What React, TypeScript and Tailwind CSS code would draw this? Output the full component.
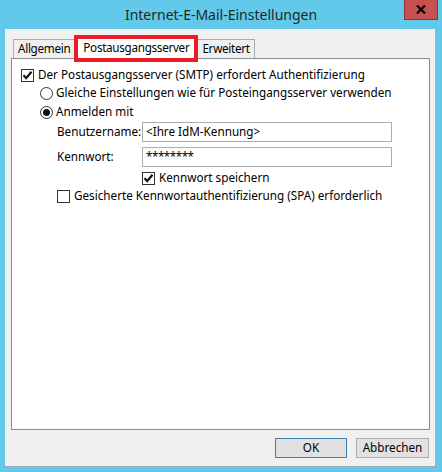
import { useState } from "react";

const font = { fontFamily: '"Segoe UI", "Noto Sans", "Open Sans", sans-serif' };

const Check = ({ checked }: { checked: boolean }) => (
  <span className="flex h-[13px] w-[13px] shrink-0 items-center justify-center border border-[#333] bg-white">
    {checked && (
      <svg width="11" height="11" viewBox="0 0 11 11">
        <path d="M1.5 5.3 L4.2 8.2 L9.5 1.8" fill="none" stroke="#111" strokeWidth="2.2" />
      </svg>
    )}
  </span>
);

const Radio = ({ checked }: { checked: boolean }) => (
  <span className="flex h-[13px] w-[13px] shrink-0 items-center justify-center rounded-full border border-[#333] bg-white">
    {checked && <span className="h-[7px] w-[7px] rounded-full bg-[#111]" />}
  </span>
);

export default function App() {
  const [tab] = useState(1);
  const tabs = ["Allgemein", "Postausgangsserver", "Erweitert"];

  return (
    <div className="flex h-[472px] w-[442px] flex-col bg-[#62c9ea] text-[11.7px] text-black" style={font}>
      {/* title bar */}
      <div className="relative flex h-[29px] shrink-0 items-center justify-center">
        <span className="text-[14px] text-[#1c2a1c]">Internet-E-Mail-Einstellungen</span>
        <div className="absolute right-[4px] top-0 flex h-[20px] w-[34px] items-center justify-center border border-t-0 border-[#8d3535] bg-[#c75050]">
          <svg width="10" height="9" viewBox="0 0 10 9">
            <path d="M1 0.5 L9 8.5 M9 0.5 L1 8.5" stroke="#000" strokeWidth="2.2" />
          </svg>
        </div>
      </div>

      {/* content */}
      <div className="mb-[5px] ml-[5px] mr-[7px] flex flex-1 flex-col border-b border-[#9aa9b0] bg-[#f0f0f0] pl-[6px] pr-[5px] pt-[7px]">
        {/* tabs */}
        <div className="relative flex h-[22px] items-end pl-[2px] tracking-[-0.3px]">
          {tabs.map((t, i) =>
            i === tab ? (
              <div key={t} className="relative z-10 -mb-px flex h-[23px] items-center border border-b-0 border-[#acacac] bg-white px-[5px]">
                {t}
                <div className="absolute -bottom-[3px] -left-[4px] -right-[4px] -top-[2px] border-4 border-[#ec1c24]" />
              </div>
            ) : (
              <div
                key={t}
                className={
                  "flex h-[19px] items-center border border-b-0 border-[#acacac] bg-[#f0f0f0] px-[4px] " +
                  (i === 0 ? "mr-[2px]" : "ml-[2px]")
                }
              >
                {t}
              </div>
            )
          )}
        </div>

        {/* panel */}
        <div className="flex h-[372px] flex-col border border-[#898c95] bg-white pl-[9px] pt-[8px]">
          <label className="flex h-[16px] items-center gap-[4px]">
            <Check checked />
            <span>Der Postausgangsserver (SMTP) erfordert Authentifizierung</span>
          </label>

          <div className="ml-[19px] mt-[1px] flex flex-col">
            <label className="flex h-[18px] items-center gap-[3px]">
              <Radio checked={false} />
              <span>Gleiche Einstellungen wie für Posteingangsserver verwenden</span>
            </label>
            <label className="mt-[1px] flex h-[18px] items-center gap-[3px]">
              <Radio checked />
              <span>Anmelden mit</span>
            </label>

            <div className="ml-[17px] mt-[1px] flex flex-col">
              <div className="flex h-[20px] items-center">
                <span className="w-[85px] shrink-0">Benutzername:</span>
                <div className="flex h-[20px] w-[250px] items-center border border-[#abadb3] bg-white pl-[3px]">
                  &lt;Ihre IdM-Kennung&gt;
                </div>
              </div>
              <div className="mt-[5px] flex h-[20px] items-center">
                <span className="w-[85px] shrink-0">Kennwort:</span>
                <div className="flex h-[20px] w-[250px] items-center border border-[#abadb3] bg-white pl-[3px] tracking-[-0.5px]">
                  ********
                </div>
              </div>
              <label className="ml-[85px] mt-[3px] flex h-[16px] items-center gap-[4px]">
                <Check checked />
                <span>Kennwort speichern</span>
              </label>
              <label className="mt-[2px] flex h-[16px] items-center gap-[4px]">
                <Check checked={false} />
                <span>Gesicherte Kennwortauthentifizierung (SPA) erforderlich</span>
              </label>
            </div>
          </div>
        </div>

        {/* buttons */}
        <div className="mt-[8px] flex justify-end">
          <button className="mr-[9px] h-[20px] w-[72px] shrink-0 border border-[#3c7fb1] bg-[#e1e1e1] px-0">OK</button>
          <button className="mr-px h-[20px] w-[73px] shrink-0 border border-[#adadad] bg-[#e1e1e1] px-0">Abbrechen</button>
        </div>
      </div>
    </div>
  );
}
